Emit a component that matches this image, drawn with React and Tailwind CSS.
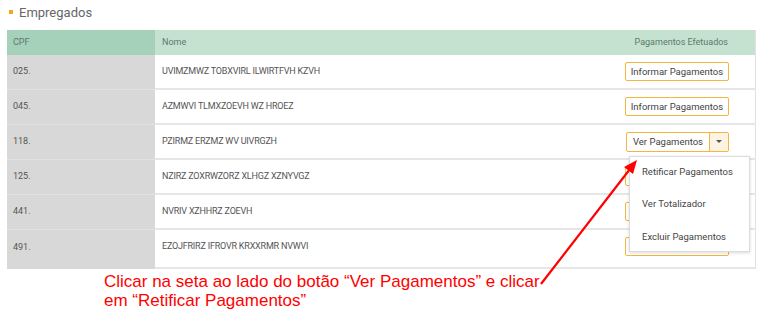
import React from "react";

const rows = [
  { cpf: "025.", nome: "UVIMZMWZ TOBXVIRL ILWIRTFVH KZVH", type: "info" },
  { cpf: "045.", nome: "AZMWVI TLMXZOEVH WZ HROEZ", type: "info" },
  { cpf: "118.", nome: "PZIRMZ ERZMZ WV UIVRGZH", type: "ver" },
  { cpf: "125.", nome: "NZIRZ ZOXRWZORZ XLHGZ XZNYVGZ", type: "hidden" },
  { cpf: "441.", nome: "NVRIV XZHHRZ ZOEVH", type: "hidden" },
  { cpf: "491.", nome: "EZOJFRIRZ IFROVR KRXXRMR NVWVI", type: "hidden" },
];

function InfoBtn({ hidden }) {
  return (
    <div className="h-[19px] w-[104px] flex items-center justify-center border border-[#f5b63f] rounded-[2px] bg-white text-[9.5px] text-[#3f3f3f] leading-none">
      <span className={hidden ? "invisible" : ""}>Informar Pagamentos</span>
    </div>
  );
}

function VerBtn() {
  return (
    <div className="flex h-[20px] border border-[#f5b63f] rounded-[2px] bg-white">
      <div className="w-[83px] flex items-center justify-center text-[9.5px] text-[#3f3f3f] leading-none border-r border-[#f5b63f]">
        Ver Pagamentos
      </div>
      <div className="w-[18px] flex items-center justify-center bg-[#fdf3e2]">
        <div className="w-0 h-0 border-l-[3px] border-r-[3px] border-t-[3px] border-l-transparent border-r-transparent border-t-[#555]" />
      </div>
    </div>
  );
}

export default function App() {
  return (
    <div
      className="relative w-[768px] h-[315px] bg-white overflow-hidden"
      style={{ fontFamily: "Roboto, 'Liberation Sans', sans-serif" }}
    >
      <div className="h-[30px] flex items-start pt-[3px] pl-[9px]">
        <div className="flex items-center gap-[6px] h-[18px]">
          <div className="w-[4px] h-[4px] bg-[#f5a623]" />
          <span className="text-[13px] text-[#666] leading-none">Empregados</span>
        </div>
      </div>

      <div className="ml-[7px] w-[749px] border-r border-[#e2e2e2]">
        <div className="flex h-[25px] text-[9px] text-[#5b7a69]">
          <div className="w-[148px] bg-[#a5d0b9] flex items-center pl-[6px]">CPF</div>
          <div className="flex-1 bg-[#c5e2d1] flex items-center pl-[7px]">Nome</div>
          <div className="w-[200px] bg-[#c5e2d1] flex items-center justify-end pr-[27px]">
            Pagamentos Efetuados
          </div>
        </div>
        {rows.map((r, i) => (
          <div
            key={i}
            className={`flex text-[9px] text-[#555] ${i === rows.length - 1 ? "h-[39px]" : "h-[35px]"}`}
          >
            <div
              className={`w-[148px] bg-[#d8d8d8] flex items-center pl-[6px] ${
                i < rows.length - 1 ? "border-b border-dotted border-[#e8e8e8]" : "pb-[4px]"
              }`}
            >
              {r.cpf}
            </div>
            <div className="flex-1 flex border-b-2 border-[#e6e6e6]">
              <div
                className={`flex-1 flex items-center pl-[7px] tracking-[-0.2px] ${
                  i === rows.length - 1 ? "pb-[4px]" : ""
                }`}
              >
                {r.nome}
              </div>
              <div
                className={`w-[200px] flex items-center justify-end pr-[26px] ${
                  i === rows.length - 1 ? "pb-[4px]" : ""
                }`}
              >
                {r.type === "ver" ? <VerBtn /> : <InfoBtn hidden={r.type === "hidden"} />}
              </div>
            </div>
          </div>
        ))}
      </div>

      <div className="absolute left-[629px] top-[156px] w-[121px] h-[96px] bg-white border border-[#dcdcdc] shadow-[0_1px_3px_rgba(0,0,0,0.15)] flex flex-col text-[9.5px] text-[#444]">
        <div className="h-[32px] flex items-center pl-[12px] pb-[1px]">Retificar Pagamentos</div>
        <div className="h-[32px] flex items-center pl-[12px]">Ver Totalizador</div>
        <div className="h-[32px] flex items-center pl-[12px] pt-[3px]">Excluir Pagamentos</div>
      </div>

      <svg className="absolute left-0 top-0" width="768" height="315" viewBox="0 0 768 315">
        <line x1="541" y1="284" x2="630" y2="169" stroke="#ff0000" strokeWidth="2.2" />
        <polygon points="637,160 624,167 633,174" fill="#ff0000" />
      </svg>

      <div
        className="absolute left-[104px] top-[272px] text-[17px] leading-[19px] text-[#ff0000]"
        style={{ fontFamily: "'Liberation Sans', Arial, sans-serif" }}
      >
        Clicar na seta ao lado do botão “Ver Pagamentos” e clicar
        <br />
        em “Retificar Pagamentos”
      </div>
    </div>
  );
}
